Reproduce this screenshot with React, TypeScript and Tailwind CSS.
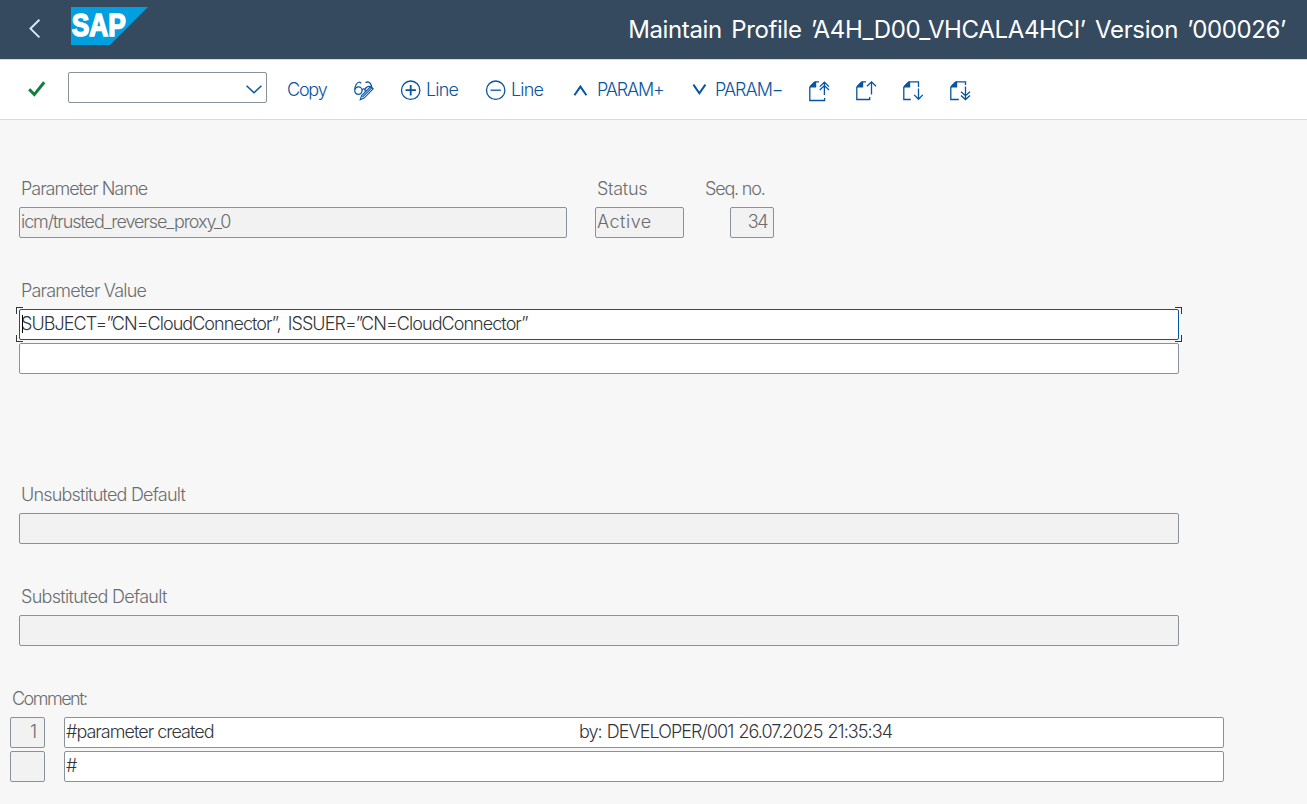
import type { ReactNode } from "react";

function Field({ className = "", children }: { className?: string; children?: ReactNode }) {
  return (
    <div className={`h-[31px] shrink-0 whitespace-pre rounded-[2px] border border-[#89919a] pl-px leading-[28px] ${className}`}>
      {children}
    </div>
  );
}

function Label({ className = "", children }: { className?: string; children: ReactNode }) {
  return <div className={`h-[31px] shrink-0 whitespace-pre leading-[31px] text-[#6a6d70] ${className}`}>{children}</div>;
}

function ToolText({ className = "", children }: { className?: string; children: ReactNode }) {
  return <span className={`shrink-0 overflow-visible whitespace-pre leading-[35px] text-[#0854a0] ${className}`}>{children}</span>;
}

function Icon({ className = "", children, strokeWidth = 1.3 }: { className?: string; children: ReactNode; strokeWidth?: number }) {
  return (
    <svg viewBox="0 0 20 20" className={`mt-[9px] h-5 w-5 shrink-0 overflow-visible ${className}`} fill="none" stroke="#0854a0" strokeWidth={strokeWidth}>
      {children}
    </svg>
  );
}

const READONLY = "bg-[#f2f2f2] text-[#6a6d70]";
const EDITABLE = "bg-white text-[#32363a]";

export default function App() {
  return (
    <div className="flex h-[804px] w-[1307px] flex-col overflow-hidden bg-[#f7f7f7] font-['Inter',sans-serif] text-[18px] font-light">
      <header className="flex h-[59px] shrink-0 items-start bg-[#354a5f]">
        <svg viewBox="0 0 12 20" className="ml-[29px] mt-[19px] h-5 w-3 shrink-0" fill="none" stroke="#d1e8ff" strokeWidth="2">
          <path d="M10.4 .8 1.5 9.6l8.9 8.8" />
        </svg>
        <svg viewBox="0 0 77 38" className="ml-[30px] mt-[7px] h-[38px] w-[77px] shrink-0">
          <path d="M0 0h77L39 38H0z" fill="#009fe0" />
          <text x="0.8" y="29.4" textLength="54" lengthAdjust="spacingAndGlyphs" fontFamily="Liberation Sans, sans-serif" fontWeight="700" fontSize="31" fill="#fff" stroke="#fff" strokeWidth="1.6">SAP</text>
        </svg>
        <h1 className="ml-auto mr-[21px] whitespace-pre text-[24px] font-[380] leading-[59px] tracking-[-0.36px] text-white [word-spacing:3px]">
          Maintain Profile ’A4H_D00_VHCALA4HCI’ Version ’000026’
        </h1>
      </header>

      <nav className="flex h-[61px] shrink-0 items-start border-y border-[#d9d9d9] bg-white pt-3">
        <svg viewBox="0 0 18 16" className="ml-7 mt-[9px] h-4 w-[18px] shrink-0" fill="none" stroke="#107e3e" strokeWidth="3">
          <path d="M1.2 8.3 6.3 13.6 16.2 1.2" />
        </svg>
        <div className="ml-[22px] flex h-[31px] w-[199px] shrink-0 justify-end rounded-[2px] border border-[#89919a] bg-white pr-[4px]">
          <svg viewBox="0 0 16 9" className="mt-3 h-[9px] w-4" fill="none" stroke="#0854a0" strokeWidth="1.5">
            <path d="m.6.8 7.4 7 7.4-7" />
          </svg>
        </div>
        <ToolText className="ml-[20px] w-[67px] tracking-[-1.2px]">Copy</ToolText>
        <Icon strokeWidth={1.2}>
          <circle cx="4.4" cy="9.6" r="3.7" />
          <path d="M.8 8.5C1 4.6 3 1 5.6 1l1.6 1.2M8 9.2c1-1.7 2.4-1.9 3.4-.4M11.5 1.8 13 .9c2.4 0 4.2 2 4.8 5.2M11.2 10.5C10 6.8 15 3.6 17.4 6.8" />
          <path d="M6.2 18.8l1.4-4.2 9.2-9.1 2.4 2.3-9.1 9.3zM8.4 16.2l9.2-9.1" strokeWidth="1.1" />
        </Icon>
        <Icon className="ml-[27px]">
          <circle cx="9.7" cy="9.2" r="9.2" />
          <path d="M4.5 9.2h10.4M9.7 4v10.4" strokeWidth="1.8" />
        </Icon>
        <ToolText className="ml-[5px] w-[59px] tracking-[-0.8px]">Line</ToolText>
        <Icon className="ml-[1px]">
          <circle cx="9.7" cy="9.2" r="9.2" />
          <path d="M4.5 9.2h10.4" />
        </Icon>
        <ToolText className="ml-[5px] w-[59px] tracking-[-0.8px]">Line</ToolText>
        <Icon strokeWidth={2}>
          <path d="m4.4 14.2 6-8.6 6 8.6" />
        </Icon>
        <ToolText className="ml-[7px] w-[93px] tracking-[-1.15px]">PARAM+</ToolText>
        <Icon className="-ml-[1px]" strokeWidth={2}>
          <path d="m4.4 3.6 6 8.6 6-8.6" />
        </Icon>
        <ToolText className="ml-[6px] w-[94px] tracking-[-1px]">PARAM−</ToolText>
        <Icon>
          <path d="M10 .8H6L.8 6.2v13.3h14.8v-2.4" />
          <path d="M5 .8h2.2v5.7H.8V5z" fill="#0854a0" stroke="none" />
          <path d="M15.4 14V2M10.8 5.6l4.6-4.4L20 5.6M10.8 9l4.6-4.4L20 9" />
        </Icon>
        <Icon className="ml-[27px]">
          <path d="M10 .8H6L.8 6.2v12.3h12.9v-2.4" />
          <path d="M5 .8h2.2v5.7H.8V5z" fill="#0854a0" stroke="none" />
          <path d="M15.5 13.5V1M11 5.2l4.5-4.4L20 5.2" />
        </Icon>
        <Icon className="ml-[27px]">
          <path d="M15.5 6V.8H6L.8 6.2v12.3h7" />
          <path d="M5 .8h2.2v5.7H.8V5z" fill="#0854a0" stroke="none" />
          <path d="M15.5 7.5v10.7M11.2 13.9l4.3 4.4 4.3-4.4" />
        </Icon>
        <Icon className="ml-[27px]">
          <path d="M15.5 4V.8H6L.8 6.2v12.3h8" />
          <path d="M5 .8h2.2v5.7H.8V5z" fill="#0854a0" stroke="none" />
          <path d="M15.5 5.5v12M11 10.8l4.5 3.9 4.5-3.9M11 14.4l4.5 4.1 4.5-4.1" />
        </Icon>
      </nav>

      <main className="flex flex-col gap-[3px] pt-[53px]">
        <div className="flex">
          <Label className="ml-[21px] w-[576px] tracking-[-1.02px]">Parameter Name</Label>
          <Label className="w-[108px] tracking-[-0.3px]">Status</Label>
          <Label className="tracking-[-1.2px]">Seq. no.</Label>
        </div>
        <div className="flex">
          <Field className={`ml-[19px] w-[548px] tracking-[-1.07px] ${READONLY}`}>icm/trusted_reverse_proxy_0</Field>
          <Field className={`ml-[28px] w-[89px] tracking-[0.5px] ${READONLY}`}>Active</Field>
          <Field className={`ml-[46px] w-[44px] pr-[6px] text-right tracking-[-1.5px] ${READONLY}`}>34</Field>
        </div>

        <Label className="ml-[21px] mt-[34px] tracking-[-0.8px]">Parameter Value</Label>
        <div className="relative ml-[19px] w-[1160px]">
          <Field className={`border-[#0854a0]! tracking-[-0.94px] [word-spacing:3px] ${EDITABLE}`}>
            SUBJECT=”CN=CloudConnector”, ISSUER=”CN=CloudConnector”
          </Field>
          <span className="absolute left-[3px] top-[6px] h-[18px] w-px bg-black" />
          <span className="absolute -left-[3px] -top-[2px] h-[7px] w-[7px] border-l border-t border-[#32363a]" />
          <span className="absolute -bottom-[2px] -left-[3px] h-[7px] w-[7px] border-b border-l border-[#32363a]" />
          <span className="absolute -right-[3px] -top-[2px] h-[7px] w-[7px] border-r border-t border-[#32363a]" />
          <span className="absolute -bottom-[2px] -right-[3px] h-[7px] w-[7px] border-b border-r border-[#32363a]" />
        </div>
        <Field className={`ml-[19px] w-[1160px] ${EDITABLE}`} />

        <Label className="ml-[21px] mt-[102px] tracking-[-0.79px]">Unsubstituted Default</Label>
        <Field className={`ml-[19px] w-[1160px] ${READONLY}`} />

        <Label className="ml-[21px] mt-[34px] tracking-[-0.69px]">Substituted Default</Label>
        <Field className={`ml-[19px] w-[1160px] ${READONLY}`} />

        <Label className="ml-[12px] mt-[34px] tracking-[-1.5px]">Comment:</Label>
        <div className="flex">
          <Field className={`ml-[10px] w-[35px] pr-[7px] text-right ${READONLY}`}>1</Field>
          <Field className={`ml-[19px] flex w-[1160px] ${EDITABLE}`}>
            <span className="w-[513px] tracking-[-0.98px]">#parameter created</span>
            <span className="tracking-[-0.95px] [word-spacing:1px]">by: DEVELOPER/001 26.07.2025 21:35:34</span>
          </Field>
        </div>
        <div className="flex">
          <Field className={`ml-[10px] w-[35px] ${READONLY}`} />
          <Field className={`ml-[19px] w-[1160px] ${EDITABLE}`}>#</Field>
        </div>
      </main>
    </div>
  );
}
